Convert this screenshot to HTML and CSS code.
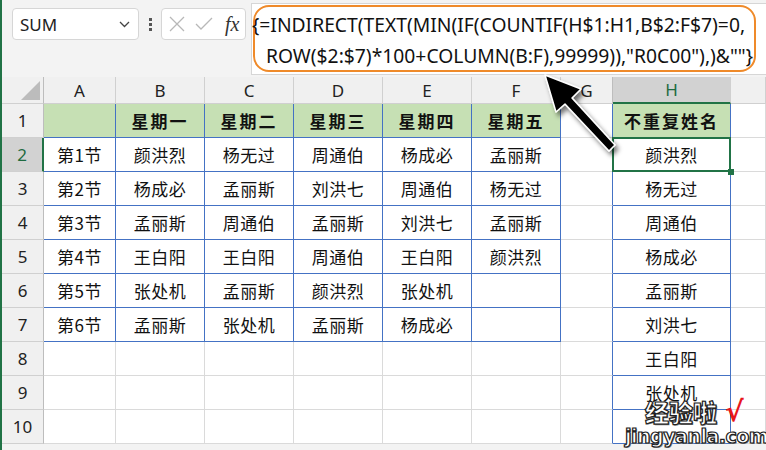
FILE: index.html
```html
<!DOCTYPE html>
<html lang="zh">
<head>
  <meta charset="UTF-8" />
  <title>INDIRECT</title>
  <link rel="stylesheet" href="styles.css">
</head>
<body>
  <div class="app">
    <div class="topbar">
      <div class="name-box">
        <span>SUM</span>
        <svg class="chev" width="11" height="7" viewBox="0 0 11 7"><path d="M1 1l4.5 4.5L10 1" fill="none" stroke="#444" stroke-width="1.3"/></svg>
      </div>
      <div class="dots"><i></i><i></i><i></i></div>
      <div class="fx-box">
        <svg width="16" height="16" viewBox="0 0 16 16"><path d="M1 1l14 14M15 1L1 15" stroke="#b8b8b8" stroke-width="1.3"/></svg>
        <svg width="18" height="14" viewBox="0 0 18 14"><path d="M1 7l5 5L17 1" fill="none" stroke="#b8b8b8" stroke-width="1.3"/></svg>
        <span class="fx">fx</span>
      </div>
      <div class="formula">
        <div class="ring">
          <div class="line">{=INDIRECT(TEXT(MIN(IF(COUNTIF(H$1:H1,B$2:F$7)=0,</div>
          <div class="line second">ROW($2:$7)*100+COLUMN(B:F),99999)),"R0C00"),)&amp;""}</div>
        </div>
      </div>
    </div>

    <div class="sheet">
      <div class="hd corner"><span class="tri"></span></div>
      <div class="hd">A</div>
      <div class="hd">B</div>
      <div class="hd">C</div>
      <div class="hd">D</div>
      <div class="hd">E</div>
      <div class="hd">F</div>
      <div class="hd pre-h">G</div>
      <div class="hd hd-sel">H</div>
      <div class="hd"></div>

      <div class="rh">1</div>
      <div class="c t g"></div>
      <div class="c t g b">星期一</div>
      <div class="c t g b">星期二</div>
      <div class="c t g b">星期三</div>
      <div class="c t g b">星期四</div>
      <div class="c t g b">星期五</div>
      <div class="c gl"></div>
      <div class="c t g b">不重复姓名</div>
      <div class="c"></div>

      <div class="rh rh-sel">2</div>
      <div class="c t">第1节</div>
      <div class="c t">颜洪烈</div>
      <div class="c t">杨无过</div>
      <div class="c t">周通伯</div>
      <div class="c t">杨成必</div>
      <div class="c t">孟丽斯</div>
      <div class="c gl"></div>
      <div class="c t sel">颜洪烈</div>
      <div class="c"></div>

      <div class="rh">3</div>
      <div class="c t">第2节</div>
      <div class="c t">杨成必</div>
      <div class="c t">孟丽斯</div>
      <div class="c t">刘洪七</div>
      <div class="c t">周通伯</div>
      <div class="c t">杨无过</div>
      <div class="c gl"></div>
      <div class="c t">杨无过</div>
      <div class="c"></div>

      <div class="rh">4</div>
      <div class="c t">第3节</div>
      <div class="c t">孟丽斯</div>
      <div class="c t">周通伯</div>
      <div class="c t">孟丽斯</div>
      <div class="c t">刘洪七</div>
      <div class="c t">孟丽斯</div>
      <div class="c gl"></div>
      <div class="c t">周通伯</div>
      <div class="c"></div>

      <div class="rh">5</div>
      <div class="c t">第4节</div>
      <div class="c t">王白阳</div>
      <div class="c t">王白阳</div>
      <div class="c t">周通伯</div>
      <div class="c t">王白阳</div>
      <div class="c t">颜洪烈</div>
      <div class="c gl"></div>
      <div class="c t">杨成必</div>
      <div class="c"></div>

      <div class="rh">6</div>
      <div class="c t">第5节</div>
      <div class="c t">张处机</div>
      <div class="c t">孟丽斯</div>
      <div class="c t">颜洪烈</div>
      <div class="c t">张处机</div>
      <div class="c t"></div>
      <div class="c gl"></div>
      <div class="c t">孟丽斯</div>
      <div class="c"></div>

      <div class="rh">7</div>
      <div class="c t">第6节</div>
      <div class="c t">孟丽斯</div>
      <div class="c t">张处机</div>
      <div class="c t">孟丽斯</div>
      <div class="c t">杨成必</div>
      <div class="c t"></div>
      <div class="c gl"></div>
      <div class="c t">刘洪七</div>
      <div class="c"></div>

      <div class="rh">8</div>
      <div class="c"></div><div class="c"></div><div class="c"></div><div class="c"></div><div class="c"></div><div class="c"></div>
      <div class="c gl"></div>
      <div class="c t">王白阳</div>
      <div class="c"></div>

      <div class="rh">9</div>
      <div class="c"></div><div class="c"></div><div class="c"></div><div class="c"></div><div class="c"></div><div class="c"></div>
      <div class="c gl"></div>
      <div class="c t">张处机</div>
      <div class="c"></div>

      <div class="rh">10</div>
      <div class="c"></div><div class="c"></div><div class="c"></div><div class="c"></div><div class="c"></div><div class="c"></div>
      <div class="c gl"></div>
      <div class="c t"></div>
      <div class="c"></div>
    </div>
  </div>

  <svg class="arrow" width="766" height="450" viewBox="0 0 766 450">
    <defs>
      <filter id="sh" x="-20%" y="-20%" width="140%" height="140%">
        <feGaussianBlur in="SourceAlpha" stdDeviation="2.5"/>
        <feOffset dx="3" dy="4"/>
        <feComponentTransfer><feFuncA type="linear" slope="0.55"/></feComponentTransfer>
        <feMerge><feMergeNode/><feMergeNode in="SourceGraphic"/></feMerge>
      </filter>
    </defs>
    <polygon filter="url(#sh)" points="545,75 581,89 572,98 615,145 609,151 565,104 556,112" fill="#000" stroke="#fff" stroke-width="1.5" stroke-linejoin="round"/>
  </svg>

  <div class="mark">
    <div class="mark-top"><span class="mark-cn">经验啦</span><span class="mark-tick">√</span></div>
    <div class="mark-url">jingyanla.com</div>
  </div>
</body>
</html>
```

FILE: styles.css
```css
* {
  box-sizing: border-box;
}

html, body {
  margin: 0;
  height: 100%;
  overflow: hidden;
}

body {
  position: relative;
  background: #f3f3f3;
  font-family: "Noto Sans", "Noto Sans CJK SC", sans-serif;
  color: #111;
}

.app {
  border-left: 2px solid #217346;
  height: 100%;
}

/* formula bar */
.topbar {
  display: flex;
  align-items: flex-start;
  height: 77px;
  padding-left: 10px;
}

.name-box {
  margin-top: 8px;
  width: 127px;
  height: 32px;
  background: #fff;
  border: 1px solid #d6d6d6;
  border-radius: 4px;
  display: flex;
  align-items: center;
  justify-content: space-between;
  padding: 0 8px 0 7px;
  font-size: 17px;
  color: #222;
}

.dots {
  margin: 18px 0 0 10px;
  width: 4px;
  display: flex;
  flex-direction: column;
  gap: 2px;
}

.dots i {
  display: block;
  width: 3px;
  height: 3px;
  background: #555;
}

.fx-box {
  margin: 8px 0 0 8px;
  width: 85px;
  height: 32px;
  background: #fff;
  border: 1px solid #d6d6d6;
  border-radius: 4px;
  display: flex;
  align-items: center;
  gap: 10px;
  padding-left: 7px;
}

.fx {
  font-family: "Liberation Serif", serif;
  font-style: italic;
  font-size: 20px;
  color: #333;
  margin-left: 2px;
}

.formula {
  flex: 1;
  margin: 3px 0 0 5px;
  height: 72px;
  background: #fff;
  border: 1px solid #d6d6d6;
  border-right: none;
  padding: 1px 0 0 1px;
}

.ring {
  width: 503px;
  height: 67px;
  border: 2px solid #ef8a2a;
  border-radius: 16px;
  font-size: 19.3px;
  line-height: 31px;
  color: #111;
  white-space: nowrap;
  padding-top: 2px;
}

.line {
  margin-left: -3px;
}

.line.second {
  margin-left: 11px;
}

/* grid */
.sheet {
  display: grid;
  grid-template-columns: 42px 72px 89px 89px 89px 89px 89px 52px 118px 1fr;
  grid-template-rows: 27px repeat(10, 34px);
  background: #fff;
  font-family: "Noto Sans CJK SC", sans-serif;
}

.hd, .rh, .c {
  border-right: 1px solid #dadada;
  border-bottom: 1px solid #dadada;
  display: flex;
  align-items: center;
  justify-content: center;
}

.hd {
  background: #f0f0f0;
  border-color: #d0d0d0;
  font-family: "Noto Sans", sans-serif;
  font-size: 17px;
  color: #222;
}

.hd.corner {
  position: relative;
  border-right-color: #bdbdbd;
}

.tri {
  position: absolute;
  right: 3px;
  bottom: 3px;
  width: 0;
  height: 0;
  border-left: 19px solid transparent;
  border-bottom: 19px solid #bcbcbc;
}

.hd.pre-h {
  border-right-color: #bdbdbd;
}

.hd-sel {
  background: #d2d2d2;
  color: #1e6b40;
  border-bottom: 2px solid #217346;
}

.rh {
  background: #f0f0f0;
  border-color: #d0d0d0;
  border-right-color: #bdbdbd;
  font-family: "Noto Sans", sans-serif;
  font-size: 17px;
  color: #222;
}

.rh-sel {
  background: #d2d2d2;
  color: #1e6b40;
  border-right: 2px solid #217346;
}

.c {
  font-size: 17px;
  letter-spacing: 0.5px;
}

.c.t {
  border-right-color: #4472c4;
  border-bottom-color: #4472c4;
}

.c.gl {
  border-right-color: #4472c4;
}

.c.g {
  background: #c6e0b4;
}

.c.b {
  font-weight: bold;
  font-size: 17px;
  letter-spacing: 2px;
}

.c.sel {
  position: relative;
}

.c.sel::after {
  content: "";
  position: absolute;
  left: -1px;
  top: -1px;
  right: -1px;
  bottom: -1px;
  border: 2px solid #217346;
}

.c.sel::before {
  content: "";
  position: absolute;
  right: -4px;
  bottom: -4px;
  width: 6px;
  height: 6px;
  background: #217346;
  z-index: 1;
}

/* overlays */
.arrow {
  position: absolute;
  left: 0;
  top: 0;
  pointer-events: none;
}

.mark {
  position: absolute;
  left: 625px;
  top: 398px;
  font-family: "DejaVu Sans", "Noto Sans CJK SC", sans-serif;
  font-weight: bold;
  color: #fff;
  -webkit-text-stroke: 1.2px #222;
  text-shadow: 1px 1px 0 #888;
}

.mark-top {
  display: flex;
  align-items: center;
  padding-left: 20px;
  line-height: 28px;
}

.mark-cn {
  font-family: "Noto Sans CJK SC", sans-serif;
  font-weight: 900;
  font-size: 24px;
}

.mark-tick {
  margin-left: 8px;
  color: #e8161b;
  -webkit-text-stroke: 0;
  text-shadow: none;
  font-size: 28px;
}

.mark-url {
  font-size: 19px;
  line-height: 20px;
  letter-spacing: -0.5px;
}
```
